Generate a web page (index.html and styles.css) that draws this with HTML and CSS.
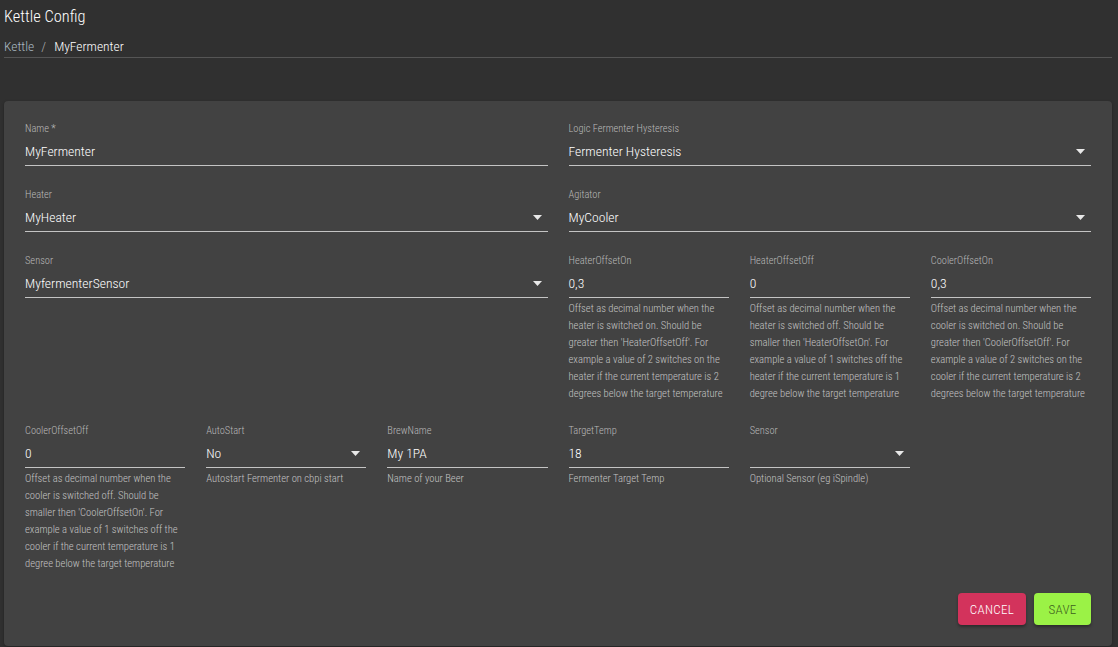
FILE: index.html
```html
<!DOCTYPE html>
<html lang="en">
<head>
<meta charset="utf-8">
<title>Kettle Config</title>
<link rel="stylesheet" href="styles.css">
</head>
<body>
<div class="page">
  <header class="topbar">
    <h1 class="title">Kettle Config</h1>
    <nav class="crumbs">
      <span class="crumb-link">Kettle</span>
      <span class="crumb-sep">/</span>
      <span class="crumb-current">MyFermenter</span>
    </nav>
  </header>

  <section class="card">
    <div class="form-grid">
      <div class="field span-3">
        <label class="field-label">Name *</label>
        <div class="field-control"><span class="value">MyFermenter</span></div>
      </div>
      <div class="field span-3">
        <label class="field-label">Logic Fermenter Hysteresis</label>
        <div class="field-control"><span class="value">Fermenter Hysteresis</span><svg class="arrow" viewBox="0 0 9 5"><polygon points="0,0 9,0 4.5,5"/></svg></div>
      </div>

      <div class="field span-3">
        <label class="field-label">Heater</label>
        <div class="field-control"><span class="value">MyHeater</span><svg class="arrow" viewBox="0 0 9 5"><polygon points="0,0 9,0 4.5,5"/></svg></div>
      </div>
      <div class="field span-3">
        <label class="field-label">Agitator</label>
        <div class="field-control"><span class="value">MyCooler</span><svg class="arrow" viewBox="0 0 9 5"><polygon points="0,0 9,0 4.5,5"/></svg></div>
      </div>

      <div class="field span-3">
        <label class="field-label">Sensor</label>
        <div class="field-control"><span class="value">MyfermenterSensor</span><svg class="arrow" viewBox="0 0 9 5"><polygon points="0,0 9,0 4.5,5"/></svg></div>
      </div>
      <div class="field">
        <label class="field-label">HeaterOffsetOn</label>
        <div class="field-control"><span class="value">0,3</span></div>
        <p class="helper">Offset as decimal number when the<br>heater is switched on. Should be<br>greater then 'HeaterOffsetOff'. For<br>example a value of 2 switches on the<br>heater if the current temperature is 2<br>degrees below the target temperature</p>
      </div>
      <div class="field">
        <label class="field-label">HeaterOffsetOff</label>
        <div class="field-control"><span class="value">0</span></div>
        <p class="helper">Offset as decimal number when the<br>heater is switched off. Should be<br>smaller then 'HeaterOffsetOn'. For<br>example a value of 1 switches off the<br>heater if the current temperature is 1<br>degree below the target temperature</p>
      </div>
      <div class="field">
        <label class="field-label">CoolerOffsetOn</label>
        <div class="field-control"><span class="value">0,3</span></div>
        <p class="helper">Offset as decimal number when the<br>cooler is switched on. Should be<br>greater then 'CoolerOffsetOff'. For<br>example a value of 2 switches on the<br>cooler if the current temperature is 2<br>degrees below the target temperature</p>
      </div>

      <div class="field">
        <label class="field-label">CoolerOffsetOff</label>
        <div class="field-control"><span class="value">0</span></div>
        <p class="helper">Offset as decimal number when the<br>cooler is switched off. Should be<br>smaller then 'CoolerOffsetOn'. For<br>example a value of 1 switches off the<br>cooler if the current temperature is 1<br>degree below the target temperature</p>
      </div>
      <div class="field">
        <label class="field-label">AutoStart</label>
        <div class="field-control"><span class="value">No</span><svg class="arrow" viewBox="0 0 9 5"><polygon points="0,0 9,0 4.5,5"/></svg></div>
        <p class="helper">Autostart Fermenter on cbpi start</p>
      </div>
      <div class="field">
        <label class="field-label">BrewName</label>
        <div class="field-control"><span class="value">My 1PA</span></div>
        <p class="helper">Name of your Beer</p>
      </div>
      <div class="field">
        <label class="field-label">TargetTemp</label>
        <div class="field-control"><span class="value">18</span></div>
        <p class="helper">Fermenter Target Temp</p>
      </div>
      <div class="field">
        <label class="field-label">Sensor</label>
        <div class="field-control"><span class="value"></span><svg class="arrow" viewBox="0 0 9 5"><polygon points="0,0 9,0 4.5,5"/></svg></div>
        <p class="helper">Optional Sensor (eg iSpindle)</p>
      </div>
    </div>

    <div class="actions">
      <button class="btn btn-cancel">CANCEL</button>
      <button class="btn btn-save">SAVE</button>
    </div>
  </section>
</div>
</body>
</html>
```

FILE: styles.css
```css
* { box-sizing: border-box; }

html, body {
  margin: 0;
  padding: 0;
  background: #303030;
  color: #ffffff;
  font-family: "Roboto Condensed", "Liberation Sans Narrow", "DejaVu Sans Condensed", "Liberation Sans", sans-serif;
  font-stretch: condensed;
  font-weight: 300;
}

.page {
  height: 647px;
  padding: 0 6px 0 4px;
  overflow: hidden;
}

.topbar {
  padding-top: 7px;
  border-bottom: 1px solid #555555;
  padding-bottom: 2px;
}

.title {
  margin: 0;
  font-size: 16.4px;
  line-height: 20px;
  font-weight: 300;
  color: #ffffff;
}

.crumbs {
  margin-top: 10px;
  display: flex;
  align-items: center;
  font-size: 13.5px;
  line-height: 18px;
}

.crumb-link { color: #a9b8c0; }
.crumb-sep { color: #b0b0b0; margin: 0 8px 0 7px; }
.crumb-current { color: #ffffff; }

.card {
  margin-top: 43px;
  background: #424242;
  border-radius: 4px;
  padding: 21px 21px 21px 21px;
  box-shadow: 0 1px 3px rgba(0,0,0,0.3);
}

.form-grid {
  display: grid;
  grid-template-columns: repeat(6, 1fr);
  column-gap: 21px;
  row-gap: 22px;
  align-items: start;
}

.span-3 { grid-column: span 3; }

.field {
  display: flex;
  flex-direction: column;
  min-width: 0;
}

.field-label {
  font-size: 10.4px;
  line-height: 14px;
  color: #b9b9b9;
  margin-bottom: 7px;
}

.field-control {
  display: flex;
  align-items: center;
  justify-content: space-between;
  height: 23px;
  padding-bottom: 5px;
  border-bottom: 1px solid #c4c4c4;
}

.value {
  font-size: 13.6px;
  line-height: 17px;
  color: #ffffff;
}

.arrow {
  width: 9px;
  height: 5px;
  margin-right: 6px;
  fill: #e8e8e8;
  flex: none;
}

.helper {
  margin: 2px 0 0 0;
  font-size: 10.6px;
  line-height: 17px;
  color: #c2c2c2;
  white-space: nowrap;
}

.actions {
  margin-top: 21px;
  display: flex;
  justify-content: flex-end;
  gap: 8px;
}

.btn {
  height: 32px;
  border: none;
  border-radius: 4px;
  padding: 0 12px;
  font-family: inherit;
  font-weight: 300;
  font-size: 13px;
  letter-spacing: 0.3px;
  box-shadow: 0 2px 3px rgba(0,0,0,0.35);
}

.btn-cancel {
  background: #d3335c;
  color: #ffffff;
  min-width: 66px;
}

.btn-save {
  background: #9bf246;
  color: #3d5e1e;
  min-width: 57px;
}
```
